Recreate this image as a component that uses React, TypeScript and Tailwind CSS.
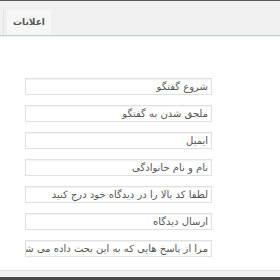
const fields = [
  'شروع گفتگو',
  'ملحق شدن به گفتگو',
  'ایمیل',
  'نام و نام خانوادگی',
  'لطفا کد بالا را در دیدگاه خود درج کنید',
  'ارسال دیدگاه',
  'مرا از پاسخ هایی که به این بحث داده می شود مطلع کن',
];

export default function App() {
  return (
    <div className="w-[280px] h-[280px] flex flex-col bg-white overflow-hidden" style={{ fontFamily: '"DejaVu Sans", Tahoma, sans-serif' }}>
      <div className="h-[1px] bg-[#5a5a5a]" />
      <div className="h-[35px] bg-[#f0f0f0] border-b border-[#c7cfcc] flex items-end pl-[3px]">
        <div className="h-[25px] border-l border-[#e2e2e2] pl-[3px] flex items-end">
          <div className="h-[25px] w-[44px] bg-[#f6f6f6] flex items-center justify-center text-[9px] font-bold text-[#555]" dir="rtl">
            اعلانات
          </div>
        </div>
      </div>
      <div className="h-[1px] bg-[#eaf6f4]" />
      <div className="flex-1 flex flex-col gap-[10px] pt-[41px] pl-[25px]">
        {fields.map((f) => (
          <div
            key={f}
            dir="rtl"
            className="w-[187px] h-[17px] border border-[#e0e0e0] shadow-[inset_0_1px_1px_rgba(0,0,0,0.05)] bg-white pr-[3px] overflow-hidden whitespace-nowrap text-right leading-[15px] text-[10px] text-[#555]"
          >
            {f}
          </div>
        ))}
      </div>
      <div className="h-[1px] bg-[#dcdcdc]" />
      <div className="h-[6px] bg-[#f1f1f1]" />
      <div className="h-[3px] bg-[#4a4a4a]" />
    </div>
  );
}
